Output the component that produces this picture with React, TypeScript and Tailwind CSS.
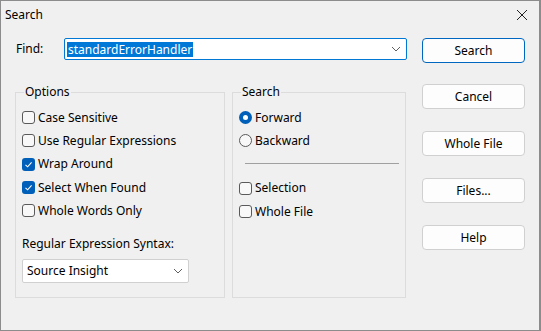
import React from "react";

const font = { fontFamily: '"Noto Sans", "Segoe UI", sans-serif' };

function Check({ checked, label }: { checked?: boolean; label: string }) {
  return (
    <div className="flex items-center h-[23.3px]">
      {checked ? (
        <div className="w-[13px] h-[13px] rounded-[3px] bg-[#005fb8] flex items-center justify-center">
          <svg width="9" height="9" viewBox="0 0 9 9">
            <path d="M1.5 4.8 L3.6 6.8 L7.6 2.3" stroke="white" strokeWidth="1.1" fill="none" />
          </svg>
        </div>
      ) : (
        <div className="w-[13px] h-[13px] rounded-[3px] border border-[#5a5a5a] bg-[#f8f8f8]" />
      )}
      <span className="ml-[3px] text-[12px] text-black leading-none">{label}</span>
    </div>
  );
}

function Radio({ checked, label }: { checked?: boolean; label: string }) {
  return (
    <div className="flex items-center h-[23.3px]">
      {checked ? (
        <div className="w-[13px] h-[13px] rounded-full bg-[#005fb8] flex items-center justify-center">
          <div className="w-[5px] h-[5px] rounded-full bg-white" />
        </div>
      ) : (
        <div className="w-[13px] h-[13px] rounded-full border border-[#5a5a5a] bg-[#f8f8f8]" />
      )}
      <span className="ml-[3px] text-[12px] text-black leading-none">{label}</span>
    </div>
  );
}

function Btn({ label, primary, className = "" }: { label: string; primary?: boolean; className?: string }) {
  return (
    <div
      className={
        "w-[103px] h-[25px] rounded-[4px] bg-[#fdfdfd] flex items-center justify-center text-[12px] text-black " +
        (primary ? "border-[1.5px] border-[#0067c0] " : "border border-[#d0d0d0] ") +
        className
      }
    >
      {label}
    </div>
  );
}

function Chevron() {
  return (
    <svg width="10" height="6" viewBox="0 0 10 6">
      <path d="M1 1 L5 5 L9 1" stroke="#606060" strokeWidth="1" fill="none" />
    </svg>
  );
}

export default function App() {
  return (
    <div
      className="w-[541px] h-[331px] bg-[#f0f0f0] border-l border-b border-r-2 border-t border-[#8c8c8c] flex flex-col"
      style={font}
    >
      <div className="h-[27px] flex items-center justify-between pl-[4px] pr-[11px]">
        <span className="text-[12px] text-black">Search</span>
        <svg width="12" height="12" viewBox="0 0 12 12">
          <path d="M1 1 L11 11 M11 1 L1 11" stroke="#222" strokeWidth="1" />
        </svg>
      </div>
      <div className="flex pl-[14px] pt-[10px]">
        <div className="w-[392px] flex flex-col">
          <div className="flex items-center h-[22px]">
            <span className="ml-[1px] w-[48px] text-[12px] text-black">Find:</span>
            <div className="w-[343px] h-[22px] bg-white border border-[#0078d4] rounded-[2px] flex items-center justify-between pl-[2px] pr-[5px]">
              <span className="bg-[#0078d7] text-white text-[12px] leading-[15px] px-[1px]">standardErrorHandler</span>
              <Chevron />
            </div>
          </div>
          <div className="flex mt-[32px]">
            <div className="relative w-[210px] h-[206px] border border-[#dcdcdc] pl-[6px] pt-[13px]">
              <span className="absolute left-[8px] top-[-9px] px-[1px] bg-[#f0f0f0] text-[12px] text-black leading-[16px]">Options</span>
              <Check label="Case Sensitive" />
              <Check label="Use Regular Expressions" />
              <Check checked label="Wrap Around" />
              <Check checked label="Select When Found" />
              <Check label="Whole Words Only" />
              <div className="mt-[14px] text-[12px] text-black leading-[16px]">Regular Expression Syntax:</div>
              <div className="mt-[7px] w-[167px] h-[24px] bg-white border border-[#d0d0d0] rounded-[2px] flex items-center justify-between pl-[4px] pr-[5px]">
                <span className="text-[12px] text-black">Source Insight</span>
                <Chevron />
              </div>
            </div>
            <div className="relative ml-[7px] w-[174px] h-[206px] border border-[#dcdcdc] pl-[6px] pt-[13px]">
              <span className="absolute left-[8px] top-[-9px] px-[1px] bg-[#f0f0f0] text-[12px] text-black leading-[16px]">Search</span>
              <Radio checked label="Forward" />
              <Radio label="Backward" />
              <div className="ml-[6px] mt-[10px] mb-[13px] w-[154px] h-[1px] bg-[#a0a0a0]" />
              <Check label="Selection" />
              <Check label="Whole File" />
            </div>
          </div>
        </div>
        <div className="ml-[15px] flex flex-col">
          <Btn primary label="Search" />
          <Btn label="Cancel" className="mt-[21px]" />
          <Btn label="Whole File" className="mt-[22px]" />
          <Btn label="Files..." className="mt-[22px]" />
          <Btn label="Help" className="mt-[22px]" />
        </div>
      </div>
    </div>
  );
}
